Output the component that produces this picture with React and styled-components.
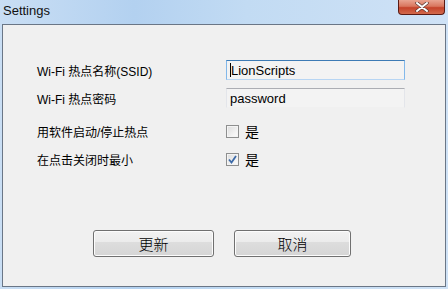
import React, { useState } from "react";
import styled, { createGlobalStyle } from "styled-components";

const GlobalStyle = createGlobalStyle`
  html, body {
    margin: 0;
    padding: 0;
    background: #c4daf2;
  }
  body {
    font-family: "Liberation Sans", "Noto Sans CJK SC", sans-serif;
    font-size: 12px;
    color: #000;
  }
`;

const Window = styled.div`
  width: 448px;
  height: 289px;
  display: flex;
  flex-direction: column;
  background: linear-gradient(90deg, #c9def4 0%, #b3d1f0 30%, #c2dbf3 55%, #cfe2f6 100%);
  box-sizing: border-box;
  overflow: hidden;
`;

const TitleBar = styled.div`
  height: 24px;
  display: flex;
  align-items: flex-start;
  justify-content: space-between;
  flex-shrink: 0;
`;

const Title = styled.div`
  padding: 2px 0 0 3px;
  font-family: "Liberation Sans", "Noto Sans", sans-serif;
  font-size: 13px;
  color: #111;
  line-height: 18px;
`;

const CloseButton = styled.div`
  width: 45px;
  height: 14px;
  margin-right: 3px;
  border: 1px solid #5a1b14;
  border-top: none;
  border-radius: 0 0 4px 4px;
  background: linear-gradient(180deg, #e9a491 0%, #d9765e 45%, #c5432a 55%, #d26a4d 100%);
  display: flex;
  align-items: center;
  justify-content: center;
`;

const Client = styled.div`
  flex: 1;
  margin: 0 2px 2px 2px;
  border: 1px solid #6a7686;
  background: #f0f0f0;
  display: flex;
  flex-direction: column;
`;

const Form = styled.div`
  display: grid;
  grid-template-columns: 189px 179px;
  padding: 35px 0 0 34px;
`;

const Label = styled.div`
  height: 20px;
  display: flex;
  align-items: center;
  margin-top: ${(p) => p.$gap || 0}px;
  white-space: nowrap;
`;

const Field = styled.div`
  height: 20px;
  display: flex;
  align-items: center;
  margin-top: ${(p) => p.$gap || 0}px;
`;

const TextBox = styled.div`
  width: 179px;
  height: 20px;
  box-sizing: border-box;
  display: flex;
  align-items: center;
  padding-left: 3px;
  font-family: "Liberation Sans", sans-serif;
  font-size: 13px;
  background: #f3f3f3;
  border: 1px solid ${(p) => (p.$focused ? "#82b8ea" : "#e3e5ea")};
  border-top-color: ${(p) => (p.$focused ? "#3d7bb5" : "#abadb3")};
  border-bottom-color: ${(p) => (p.$focused ? "#b7d5f3" : "#f0f0f0")};
`;

const Caret = styled.span`
  width: 1px;
  height: 14px;
  background: #000;
`;

const CheckLabel = styled.label`
  display: flex;
  align-items: center;
  gap: 6px;
  font-size: 14px;
  cursor: pointer;
`;

const Box = styled.span`
  width: 13px;
  height: 13px;
  box-sizing: border-box;
  border: 1px solid #8e8f8f;
  background: linear-gradient(135deg, #dcdcdc 0%, #f4f4f4 70%, #fbfbfb 100%);
  display: flex;
  align-items: center;
  justify-content: center;
  box-shadow: inset 0 0 0 1px #f4f4f4;
`;

const ButtonRow = styled.div`
  display: flex;
  gap: 20px;
  padding: 61px 0 0 90px;
`;

const Button = styled.button`
  width: ${(p) => p.$w}px;
  height: 27px;
  border: 1px solid #707070;
  border-radius: 3px;
  background: linear-gradient(180deg, #f2f2f2 0%, #ebebeb 45%, #dddddd 46%, #d5d5d5 100%);
  box-shadow: inset 0 0 0 1px #fcfcfc;
  font-family: "Noto Sans CJK SC", sans-serif;
  font-size: 15px;
  font-weight: 300;
  color: #000;
  padding: 0;
  line-height: 25px;
  cursor: pointer;
`;

const CheckMark = () => (
  <svg width="9" height="9" viewBox="0 0 9 9">
    <path d="M1 4.5 L3.5 7.5 L8 1" fill="none" stroke="#3c6aa8" strokeWidth="1.8" />
  </svg>
);

const Checkbox = ({ checked, onToggle, text }) => (
  <CheckLabel onClick={onToggle}>
    <Box>{checked && <CheckMark />}</Box>
    <span>{text}</span>
  </CheckLabel>
);

export default function App() {
  const [hotspot, setHotspot] = useState(false);
  const [minimize, setMinimize] = useState(true);

  return (
    <>
      <GlobalStyle />
      <Window>
        <TitleBar>
          <Title>Settings</Title>
          <CloseButton>
            <svg width="14" height="10" viewBox="0 0 14 10">
              <path d="M2 1 L12 9 M12 1 L2 9" stroke="#5a3a36" strokeWidth="3.4" strokeLinecap="round" />
              <path d="M2 1 L12 9 M12 1 L2 9" stroke="#ffffff" strokeWidth="2" strokeLinecap="round" />
            </svg>
          </CloseButton>
        </TitleBar>
        <Client>
          <Form>
            <Label>Wi-Fi 热点名称(SSID)</Label>
            <Field>
              <TextBox $focused>
                <Caret />
                LionScripts
              </TextBox>
            </Field>
            <Label $gap={8}>Wi-Fi 热点密码</Label>
            <Field $gap={8}>
              <TextBox>password</TextBox>
            </Field>
            <Label $gap={13}>用软件启动/停止热点</Label>
            <Field $gap={13}>
              <Checkbox checked={hotspot} onToggle={() => setHotspot(!hotspot)} text="是" />
            </Field>
            <Label $gap={8}>在点击关闭时最小</Label>
            <Field $gap={8}>
              <Checkbox checked={minimize} onToggle={() => setMinimize(!minimize)} text="是" />
            </Field>
          </Form>
          <ButtonRow>
            <Button $w={121}>更新</Button>
            <Button $w={117}>取消</Button>
          </ButtonRow>
        </Client>
      </Window>
    </>
  );
}
